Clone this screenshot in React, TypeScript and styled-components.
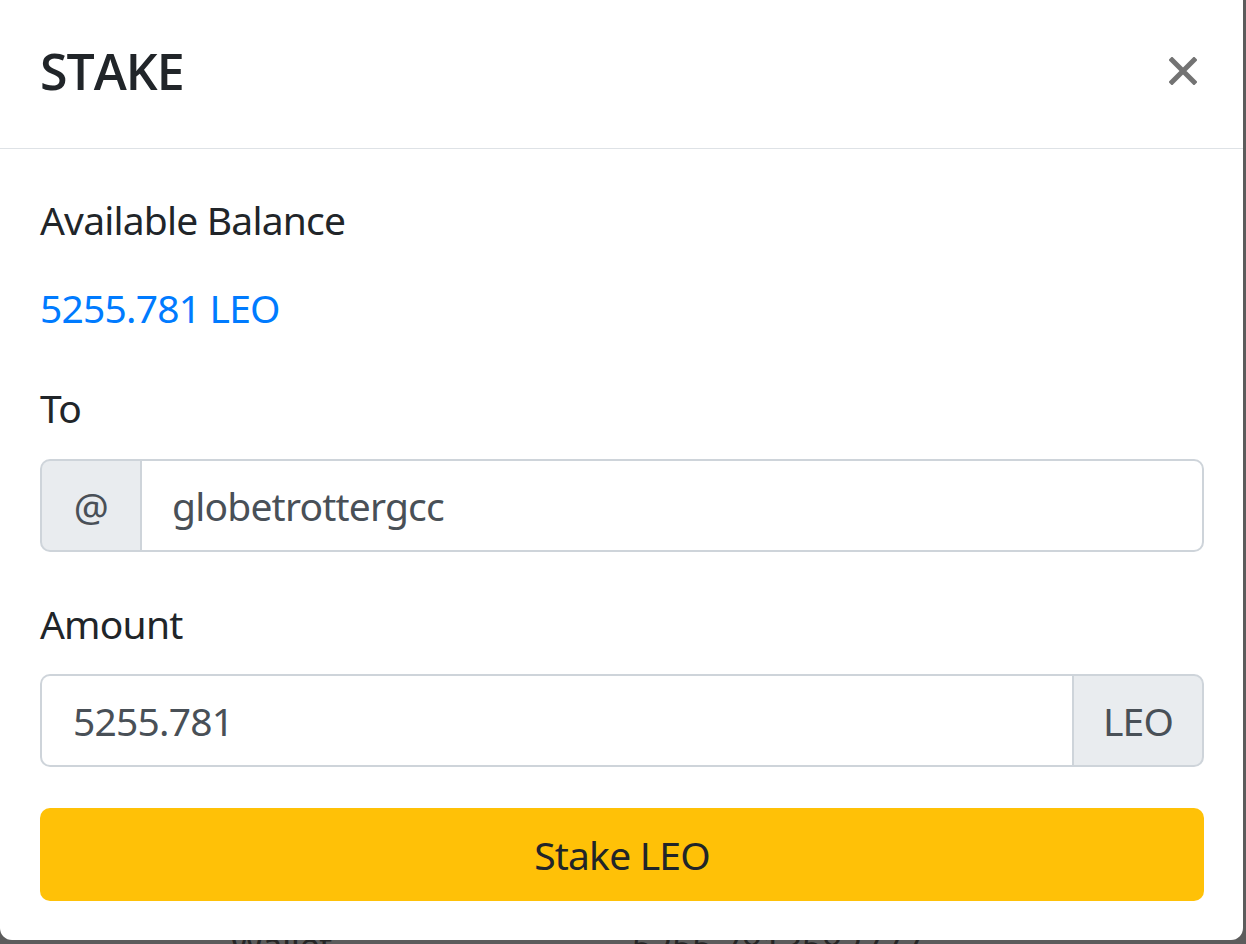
import React from "react";
import styled, { createGlobalStyle } from "styled-components";

const Global = createGlobalStyle`
  html, body { margin: 0; padding: 0; }
  body {
    background: #5c5c5c;
    font-family: "Segoe UI", "Noto Sans", "Open Sans", sans-serif;
    overflow: hidden;
  }
  * { box-sizing: border-box; }
`;

const Page = styled.div`
  width: 1246px;
  height: 944px;
  overflow: hidden;
  position: relative;
`;

const Modal = styled.div`
  width: 1243px;
  background: #fff;
  border-radius: 0 0 12px 12px;
  color: #212529;
  position: relative;
  z-index: 1;
`;

const Header = styled.div`
  height: 149px;
  display: flex;
  align-items: center;
  justify-content: space-between;
  padding: 0 46px 6px 40px;
  border-bottom: 1px solid #dee2e6;
`;

const Title = styled.h5`
  margin: 0;
  font-family: "Open Sans", "Noto Sans", sans-serif;
  font-size: 50px;
  font-weight: 600;
  letter-spacing: -1px;
  line-height: 60px;
  color: #212529;
`;

const Close = styled.button`
  border: 0;
  background: transparent;
  padding: 0;
  width: 28px;
  height: 28px;
  display: flex;
  cursor: pointer;
`;

const Body = styled.div`
  padding: 42px 39px 39px 40px;
  display: flex;
  flex-direction: column;
  letter-spacing: -0.8px;
`;

const Label = styled.div<{ $gap: number; $blue?: boolean }>`
  font-size: 39px;
  line-height: 58px;
  margin-bottom: ${(p) => p.$gap}px;
  color: ${(p) => (p.$blue ? "#007bff" : "#212529")};
`;

const Group = styled.div<{ $gap: number }>`
  display: flex;
  height: 93px;
  margin-bottom: ${(p) => p.$gap}px;
`;

const Addon = styled.div<{ $side: "left" | "right"; $w: number }>`
  width: ${(p) => p.$w}px;
  flex: none;
  display: flex;
  align-items: center;
  justify-content: center;
  background: #e9ecef;
  border: 2px solid #ced4da;
  color: #495057;
  font-size: 39px;
  border-radius: ${(p) => (p.$side === "left" ? "10px 0 0 10px" : "0 10px 10px 0")};
  ${(p) => (p.$side === "left" ? "border-right: 0;" : "border-left: 2px solid #ced4da;")}
`;

const Field = styled.div<{ $side: "left" | "right" }>`
  flex: 1;
  display: flex;
  align-items: center;
  border: 2px solid #ced4da;
  background: #fff;
  color: #495057;
  font-size: 39px;
  padding-left: ${(p) => (p.$side === "left" ? "30px" : "31px")};
  border-radius: ${(p) => (p.$side === "left" ? "0 10px 10px 0" : "10px 0 0 10px")};
  ${(p) => (p.$side === "right" ? "border-right: 0;" : "")}
`;

const Button = styled.button`
  height: 93px;
  width: 100%;
  border: 0;
  border-radius: 10px;
  background: #ffc107;
  color: #212529;
  font-family: inherit;
  font-size: 39px;
  letter-spacing: -0.8px;
  cursor: pointer;
  padding: 0;
`;

const BehindRow = styled.div`
  display: flex;
  font-size: 36px;
  line-height: 36px;
  margin-top: -12px;
  color: #262626;
  padding-left: 230px;
  gap: 300px;
  letter-spacing: -0.5px;
`;

const XIcon = () => (
  <svg width="28" height="28" viewBox="0 0 28 28">
    <path d="M3 3 L25 25 M25 3 L3 25" stroke="#737373" strokeWidth="5" strokeLinecap="square" />
  </svg>
);

export default function App() {
  return (
    <Page>
      <Global />
      <Modal>
        <Header>
          <Title>STAKE</Title>
          <Close aria-label="Close">
            <XIcon />
          </Close>
        </Header>
        <Body>
          <Label $gap={30}>Available Balance</Label>
          <Label $gap={42} $blue>5255.781 LEO</Label>
          <Label $gap={22}>To</Label>
          <Group $gap={43}>
            <Addon $side="left" $w={100}>@</Addon>
            <Field $side="left">globetrottergcc</Field>
          </Group>
          <Label $gap={21}>Amount</Label>
          <Group $gap={41}>
            <Field $side="right">5255.781</Field>
            <Addon $side="right" $w={132}>LEO</Addon>
          </Group>
          <Button>Stake LEO</Button>
        </Body>
      </Modal>
      <BehindRow>
        <span>Wallet</span>
        <span>5255.7813582777</span>
      </BehindRow>
    </Page>
  );
}
